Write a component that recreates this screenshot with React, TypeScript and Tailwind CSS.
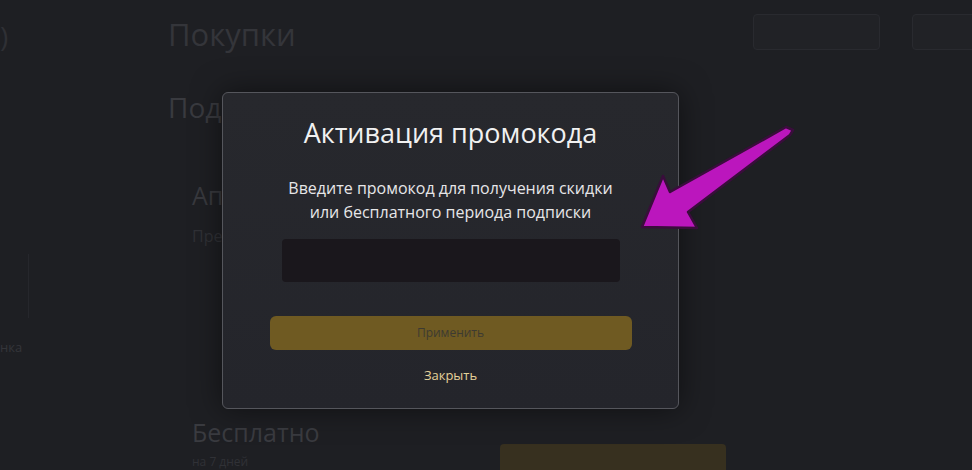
import { useState } from "react";

const font = { fontFamily: '"Open Sans", "Noto Sans", "Liberation Sans", sans-serif' };

export default function App() {
  const [code, setCode] = useState("");

  return (
    <div className="relative h-[470px] w-full overflow-hidden bg-[#1e1f23]" style={font}>
      {/* Background page (dimmed) */}
      <div className="flex h-full">
        {/* Sidebar */}
        <aside className="flex w-[168px] flex-col">
          <div className="pt-[22px] text-[28px] leading-none text-[#2f3035]">)</div>
          <div className="ml-[28px] mt-[204px] h-[64px] w-px bg-[#26272c]" />
          <div className="mt-[20px] text-[13px] text-[#34353a]">нка</div>
        </aside>

        {/* Main */}
        <main className="flex flex-1 flex-col">
          <div className="flex items-start justify-between pt-[14px]">
            <h1 className="mt-[2px] text-[31px] leading-[36px] text-[#34353a]">Покупки</h1>
            <div className="-mr-[10px] flex gap-[32px]">
              <div className="h-[36px] w-[127px] rounded border border-[#292a2f] bg-[#212226]" />
              <div className="h-[36px] w-[70px] rounded border border-[#292a2f] bg-[#212226]" />
            </div>
          </div>
          <h2 className="mt-[38px] text-[28px] leading-[34px] text-[#393a3f]">Подписки</h2>
          <div className="ml-[24px] mt-[56px] flex flex-col">
            <div className="text-[25px] leading-[30px] text-[#38393e]">Аптека</div>
            <div className="mt-[14px] text-[16px] text-[#303136]">Премиум</div>
          </div>
          <div className="ml-[24px] mt-[169px] flex items-start justify-between pr-[246px]">
            <div className="flex flex-col">
              <div className="text-[25px] leading-[30px] text-[#3a3b40]">Бесплатно</div>
              <div className="mt-[6px] text-[12px] text-[#303136]">на 7 дней</div>
            </div>
            <div className="mt-[27px] h-[40px] w-[226px] rounded bg-[#37301f]" />
          </div>
        </main>
      </div>

      {/* Modal */}
      <div className="absolute left-[222px] top-[92px] flex w-[457px] flex-col items-center rounded-md border border-[#55565c] bg-gradient-to-b from-[#27282d] to-[#24252b] pb-[22px] pt-[20px] shadow-[0_0_30px_rgba(0,0,0,0.5)]">
        <h3 className="text-[27px] leading-[40px] text-[#f1f1f1]">Активация промокода</h3>
        <p className="mt-[23px] text-center text-[16px] font-medium leading-[24px] text-[#e6e6e8]">
          Введите промокод для получения скидки
          <br />
          или бесплатного периода подписки
        </p>
        <input
          value={code}
          onChange={e => setCode(e.target.value)}
          className="mt-[15px] h-[43px] w-[338px] rounded-sm bg-[#1a171c] px-3 text-sm text-white outline-none"
        />
        <button className="mt-[34px] h-[34px] w-[362px] rounded-md bg-[#6f5a22] text-[12px] text-[#3d3a31]">
          Применить
        </button>
        <button className="mt-[16px] text-[13px] font-medium text-[#e4d29a]">Закрыть</button>
      </div>

      {/* Annotation arrow */}
      <svg className="pointer-events-none absolute left-0 top-0" width="972" height="470" viewBox="0 0 972 470">
        <polygon
          points="786,127 793,130 790,135 688,212 697,228 642,227 663,176 670,192"
          fill="#bb16bd"
          stroke="#3a0d3c"
          strokeWidth="2.5"
          strokeLinejoin="round"
        />
      </svg>
    </div>
  );
}
